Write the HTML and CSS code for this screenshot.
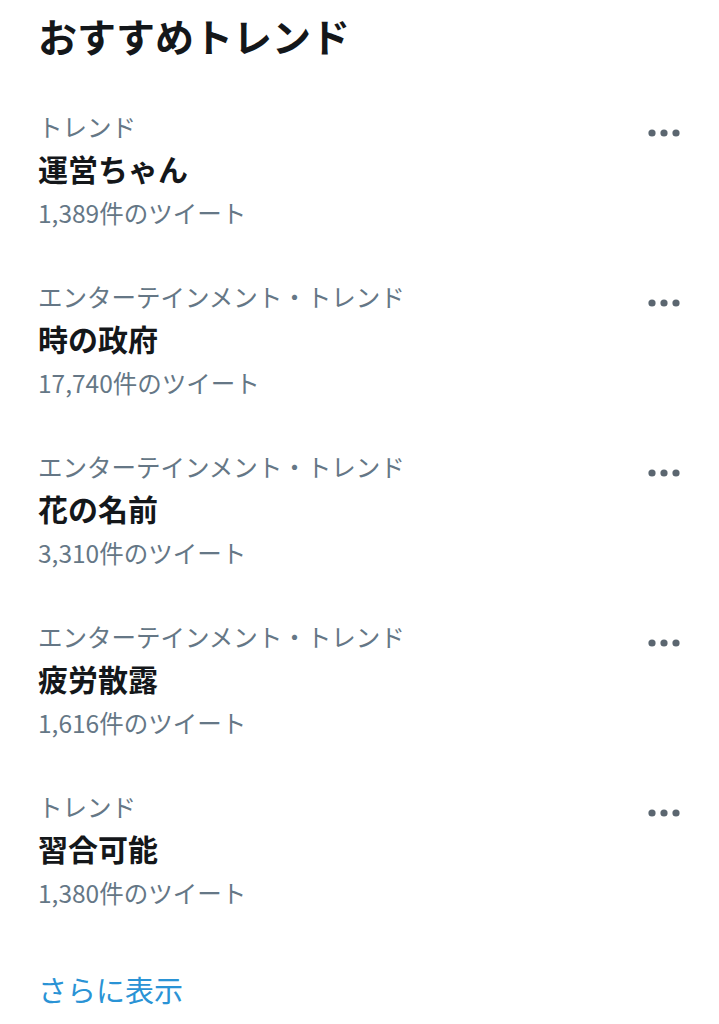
FILE: index.html
```html
<!DOCTYPE html>
<html lang="ja">
<head>
    <meta charset="UTF-8">
    <meta name="viewport" content="width=device-width, initial-scale=1.0">
    <title>おすすめトレンド</title>
    <link rel="stylesheet" href="styles.css">
</head>
<body>
    <h1 class="heading">おすすめトレンド</h1>

    <ul class="trend-list">
        <li class="trend">
            <div class="trend-text">
                <div class="trend-label">トレンド</div>
                <div class="trend-name">運営ちゃん</div>
                <div class="trend-count">1,389件のツイート</div>
            </div>
            <svg class="more" width="32" height="10" viewBox="0 0 32 10"><circle cx="4" cy="5" r="3.6"/><circle cx="16" cy="5" r="3.6"/><circle cx="28" cy="5" r="3.6"/></svg>
        </li>
        <li class="trend">
            <div class="trend-text">
                <div class="trend-label">エンターテインメント・トレンド</div>
                <div class="trend-name">時の政府</div>
                <div class="trend-count">17,740件のツイート</div>
            </div>
            <svg class="more" width="32" height="10" viewBox="0 0 32 10"><circle cx="4" cy="5" r="3.6"/><circle cx="16" cy="5" r="3.6"/><circle cx="28" cy="5" r="3.6"/></svg>
        </li>
        <li class="trend">
            <div class="trend-text">
                <div class="trend-label">エンターテインメント・トレンド</div>
                <div class="trend-name">花の名前</div>
                <div class="trend-count">3,310件のツイート</div>
            </div>
            <svg class="more" width="32" height="10" viewBox="0 0 32 10"><circle cx="4" cy="5" r="3.6"/><circle cx="16" cy="5" r="3.6"/><circle cx="28" cy="5" r="3.6"/></svg>
        </li>
        <li class="trend">
            <div class="trend-text">
                <div class="trend-label">エンターテインメント・トレンド</div>
                <div class="trend-name">疲労散露</div>
                <div class="trend-count">1,616件のツイート</div>
            </div>
            <svg class="more" width="32" height="10" viewBox="0 0 32 10"><circle cx="4" cy="5" r="3.6"/><circle cx="16" cy="5" r="3.6"/><circle cx="28" cy="5" r="3.6"/></svg>
        </li>
        <li class="trend">
            <div class="trend-text">
                <div class="trend-label">トレンド</div>
                <div class="trend-name">習合可能</div>
                <div class="trend-count">1,380件のツイート</div>
            </div>
            <svg class="more" width="32" height="10" viewBox="0 0 32 10"><circle cx="4" cy="5" r="3.6"/><circle cx="16" cy="5" r="3.6"/><circle cx="28" cy="5" r="3.6"/></svg>
        </li>
    </ul>

    <a class="show-more" href="#">さらに表示</a>
</body>
</html>
```

FILE: styles.css
```css
body {
    margin: 0;
    padding: 0 39px 0 38px;
    background-color: #ffffff;
    font-family: "Noto Sans CJK JP", "Noto Sans", sans-serif;
    color: #14171a;
}

.heading {
    margin: 10px 0 50px;
    font-size: 39px;
    line-height: 50px;
    font-weight: bold;
}

.trend-list {
    list-style: none;
    margin: 0;
    padding: 0;
}

.trend {
    display: flex;
    justify-content: space-between;
    align-items: flex-start;
    padding-bottom: 46px;
}

.trend-label {
    font-size: 24.5px;
    line-height: 34px;
    color: #657786; /* grey meta text */
}

.trend-name {
    font-size: 30px;
    line-height: 48px;
    font-weight: bold;
}

.trend-count {
    font-size: 24.5px;
    line-height: 42px;
    color: #657786;
}

.more {
    fill: #5b6670;
    margin-top: 18px;
}

.show-more {
    display: block;
    margin-top: 9px;
    font-size: 29px;
    line-height: 40px;
    color: #2a93d5;
    text-decoration: none;
}
```
